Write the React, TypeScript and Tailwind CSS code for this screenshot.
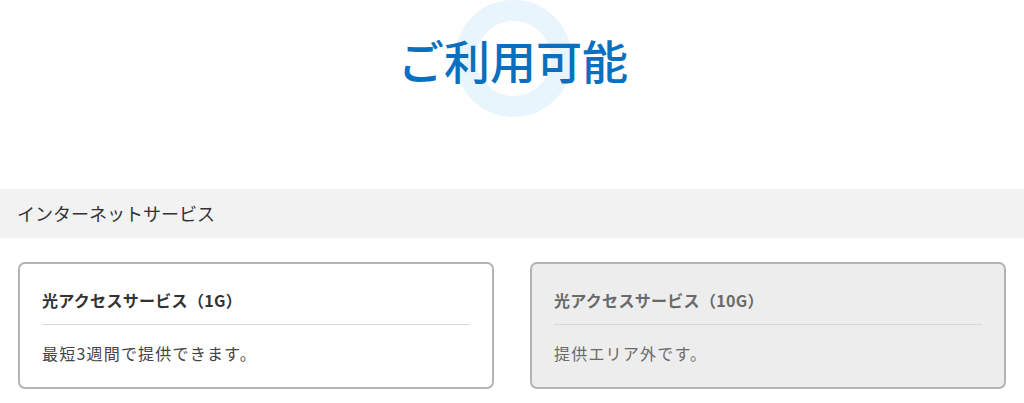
import React from "react";

const font = { fontFamily: '"Noto Sans CJK JP", "Noto Sans", sans-serif' };

function Card({ title, body, disabled }: { title: string; body: string; disabled?: boolean }) {
  return (
    <div
      className={
        "flex-1 rounded-[7px] border-2 border-[#b4b4b4] px-[22px] pt-[24px] pb-[22px] " +
        (disabled ? "bg-[#ededed]" : "bg-white")
      }
    >
      <div className={"text-[16px] font-bold leading-[24px] pb-[12px] border-b border-[#d9d9d9] tracking-[0.3px] " + (disabled ? "text-[#6a6a6a]" : "text-[#333333]")}>
        {title}
      </div>
      <div className={"mt-[16px] text-[16px] leading-[24px] tracking-[1.2px] " + (disabled ? "text-[#6a6a6a]" : "text-[#444444]")}>
        {body}
      </div>
    </div>
  );
}

export default function App() {
  return (
    <div className="w-[1024px] h-[403px] bg-white overflow-hidden" style={font}>
      <div className="relative h-[117px] flex items-center justify-center">
        <div className="absolute left-[455px] top-[0px] w-[117px] h-[117px] rounded-full border-[21px] border-[#e9f5fd]" />
        <h1 className="relative text-[46px] font-medium leading-none text-[#0b6fc0] pl-[2px]">ご利用可能</h1>
      </div>
      <div className="mt-[72px] h-[49px] bg-[#f2f2f2] flex items-center pl-[17px]">
        <span className="text-[18px] text-[#333333]">インターネットサービス</span>
      </div>
      <div className="mt-[24px] px-[18px] flex gap-[36px]">
        <Card title="光アクセスサービス（1G）" body="最短3週間で提供できます。" />
        <Card title="光アクセスサービス（10G）" body="提供エリア外です。" disabled />
      </div>
    </div>
  );
}
